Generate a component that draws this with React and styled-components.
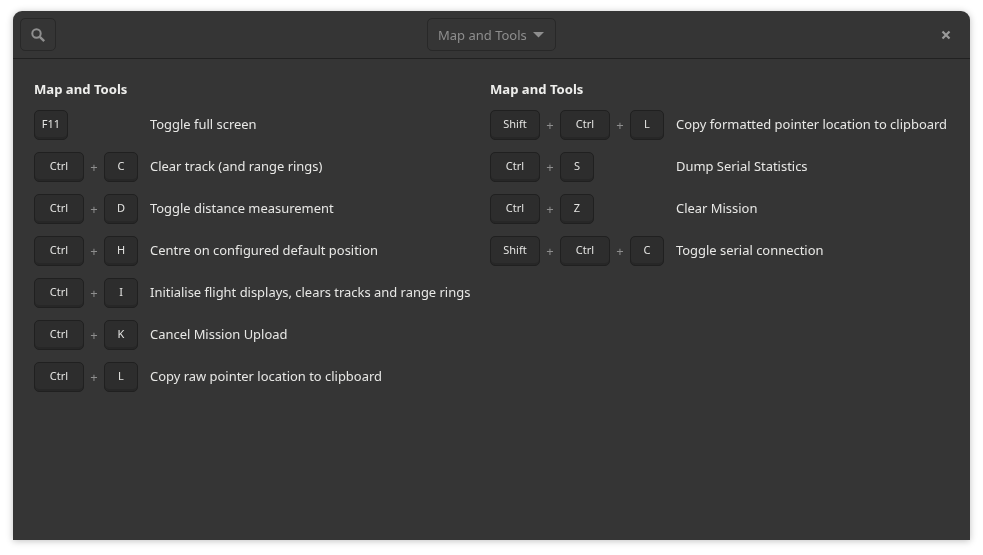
import React from "react";
import styled, { createGlobalStyle } from "styled-components";

const Global = createGlobalStyle`
  html, body { margin: 0; padding: 0; background: #fff; }
  body { font-family: "Noto Sans", sans-serif; }
`;

const Page = styled.div`
  width: 983px;
  height: 555px;
  box-sizing: border-box;
  padding: 11px 13px 15px;
  overflow: hidden;
`;

const Window = styled.div`
  height: 529px;
  background: #353535;
  border-radius: 9px 9px 0 0;
  box-shadow: 0 1px 7px rgba(0, 0, 0, 0.25);
  display: flex;
  flex-direction: column;
  overflow: hidden;
  will-change: transform;
`;

const Header = styled.header`
  height: 48px;
  flex: none;
  box-sizing: border-box;
  border-bottom: 1px solid #212121;
  padding: 7px;
  display: grid;
  grid-template-columns: 1fr auto 1fr;
  align-items: center;
`;

const HeaderButton = styled.div`
  box-sizing: border-box;
  height: 33px;
  border: 1px solid #282828;
  border-radius: 5px;
  display: flex;
  align-items: center;
  color: #8f8f8f;
`;

const SearchButton = styled(HeaderButton)`
  width: 36px;
  justify-content: center;
`;

const Title = styled(HeaderButton)`
  width: 129px;
  padding-left: 10px;
  gap: 6px;
  font-size: 13px;
  color: #8e8e8e;
`;

const CloseButton = styled.div`
  width: 10px;
  height: 10px;
  display: flex;
  justify-self: end;
  margin-right: 12px;
  color: #9a9a9a;
`;

const Body = styled.main`
  padding: 21px 21px 0;
  display: flex;
`;

const Column = styled.section`
  width: 456px;
  flex: none;
`;

const Heading = styled.h2`
  margin: 0 0 4px;
  height: 19px;
  line-height: 19px;
  font-size: 13.1px;
  font-weight: 700;
  color: #eeeeec;
`;

const Row = styled.div`
  height: 42px;
  display: flex;
  align-items: center;
`;

const Keys = styled.div`
  width: ${(p) => p.$w}px;
  flex: none;
  display: flex;
  align-items: center;
  margin-top: 2px;
  margin-right: 12px;
`;

const Key = styled.kbd`
  box-sizing: border-box;
  width: ${(p) => (p.$wide ? 50 : 34)}px;
  height: 30px;
  padding-bottom: 4px;
  background: #2d2d2d;
  border: 1px solid #202020;
  box-shadow: inset 0 -2px 0 #272727;
  border-radius: 5px;
  display: flex;
  align-items: center;
  justify-content: center;
  font-family: "Noto Sans", sans-serif;
  font-size: 11px;
  color: #e4e4e2;
`;

const Plus = styled.span`
  width: 20px;
  text-align: center;
  font-size: 13px;
  line-height: 18px;
  color: #8e8e8e;
`;

const Label = styled.span`
  font-size: 12.95px;
  color: #e8e8e6;
  white-space: nowrap;
`;

const Search = () => (
  <svg width="16" height="16" viewBox="0 0 16 16" fill="none" stroke="currentColor">
    <circle cx="6.5" cy="6.5" r="4.2" strokeWidth="2" />
    <path d="M9.8 9.8 14.2 14.2" strokeWidth="2.4" />
  </svg>
);

const Caret = () => (
  <svg width="11" height="6" viewBox="0 0 11 6">
    <path d="M0 0h11L5.5 5.5z" fill="#8e8e8e" />
  </svg>
);

const Cross = () => (
  <svg width="10" height="10" viewBox="0 0 10 10" stroke="currentColor" strokeWidth="2.2">
    <path d="M1.5 1.5l7 7M8.5 1.5l-7 7" />
  </svg>
);

const left = [
  [["F11"], "Toggle full screen"],
  [["Ctrl", "C"], "Clear track (and range rings)"],
  [["Ctrl", "D"], "Toggle distance measurement"],
  [["Ctrl", "H"], "Centre on configured default position"],
  [["Ctrl", "I"], "Initialise flight displays, clears tracks and range rings"],
  [["Ctrl", "K"], "Cancel Mission Upload"],
  [["Ctrl", "L"], "Copy raw pointer location to clipboard"],
];

const right = [
  [["Shift", "Ctrl", "L"], "Copy formatted pointer location to clipboard"],
  [["Ctrl", "S"], "Dump Serial Statistics"],
  [["Ctrl", "Z"], "Clear Mission"],
  [["Shift", "Ctrl", "C"], "Toggle serial connection"],
];

const Group = ({ rows, keysWidth }) => (
  <Column>
    <Heading>Map and Tools</Heading>
    {rows.map(([keys, label]) => (
      <Row key={label}>
        <Keys $w={keysWidth}>
          {keys.map((k, i) => (
            <React.Fragment key={k}>
              {i > 0 && <Plus>+</Plus>}
              <Key $wide={k.length > 3}>{k}</Key>
            </React.Fragment>
          ))}
        </Keys>
        <Label>{label}</Label>
      </Row>
    ))}
  </Column>
);

export default function App() {
  return (
    <Page>
      <Global />
      <Window>
        <Header>
          <SearchButton><Search /></SearchButton>
          <Title>Map and Tools <Caret /></Title>
          <CloseButton><Cross /></CloseButton>
        </Header>
        <Body>
          <Group rows={left} keysWidth={104} />
          <Group rows={right} keysWidth={174} />
        </Body>
      </Window>
    </Page>
  );
}
